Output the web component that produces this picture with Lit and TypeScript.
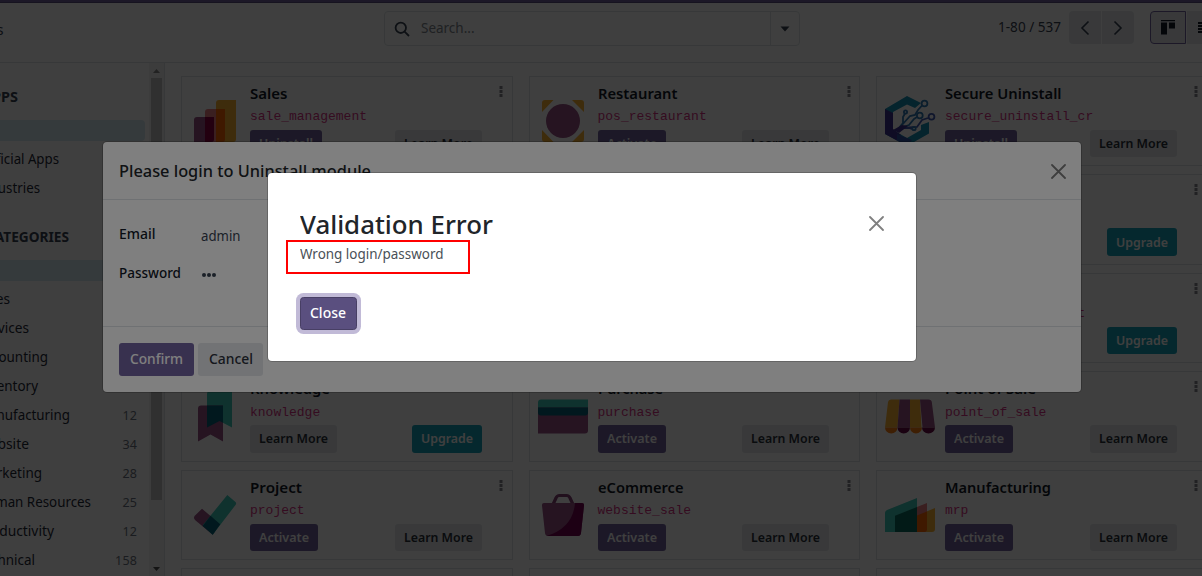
import { LitElement, html, svg, css, nothing } from "lit";
import { customElement, property } from "lit/decorators.js";

/** A single line of text set to an exact measure. */
@customElement("fit-text")
class FitText extends LitElement {
  @property({ type: Number }) w = 0;
  @property() text = "";

  static styles = css`
    :host { display: inline-block; white-space: pre; text-align: left; flex: none; }
    .t { display: inline-block; transform-origin: 0 50%; }
  `;

  render() {
    return html`<span class="t">${this.text}</span>`;
  }

  updated() {
    const span = this.renderRoot.querySelector(".t") as HTMLElement;
    const natural = span.offsetWidth ? span.getBoundingClientRect().width : 0;
    if (!natural || !this.w) return;
    this.style.width = `${this.w}px`;
    span.style.transform = `scaleX(${this.w / natural})`;
  }
}

const fit = (text: string, w: number) => html`<fit-text .text=${text} .w=${w}></fit-text>`;

const PLUM = "#985184";
const GOLD = "#fbb130";
const TEAL = "#3fc9b8";
const NAVY = "#046078";

const logos: Record<string, unknown> = {
  sales: svg`
    <path d="M29 4h17v39a3 3 0 0 1-3 3H26V7a3 3 0 0 1 3-3z" fill=${GOLD}/>
    <path d="M18 13h17v30a3 3 0 0 1-3 3H15V16a3 3 0 0 1 3-3z" fill="#e87d80"/>
    <path d="M26 13h9v30a3 3 0 0 1-3 3h-6z" fill="#fc6400"/>
    <path d="M7 21h17v22a3 3 0 0 1-3 3H4V24a3 3 0 0 1 3-3z" fill=${PLUM}/>
    <path d="M15 21h9v22a3 3 0 0 1-3 3h-6z" fill="#8c0040"/>`,
  restaurant: svg`
    <path d="M7 4h8.500L4 16V7a3 3 0 0 1 3-3zM43 4h-9L46 16V7a3 3 0 0 0-3-3zM7 46h8.500L4 34v9a3 3 0 0 0 3 3zM43 46h-9L46 34v9a3 3 0 0 1-3 3z" fill=${GOLD}/>
    <circle cx="25" cy="25" r="17" fill=${PLUM}/>`,
  secure: svg`
    <path d="M22 0L36 7 30 12 22 8.500 8 16v18l14 8 14-8v-5l8-3v11.500L22 50 0 38V13z" fill="#1690b4"/>
    <path d="M0 13l8 4v16l8 6-4 5.500L0 38z" fill="#3c3290"/>
    <path d="M12 38l10 4 5 2-5 6-10-5.500z" fill="#2f52a4"/>
    <g fill="none" stroke="#2d78b4" stroke-width="1.800">
      <path d="M13 33l5-6V21l2-3.500M17 29l8-9 5-1 3-5 4-4.500M15 32l9-3 5-6 3-2"/>
      <path d="M17 32l15-1 5-7 6-2M18 32h6l3 1" stroke="#4058b0"/>
      <circle cx="39.500" cy="7.500" r="2.900"/><circle cx="34.800" cy="19.500" r="2.900"/>
      <circle cx="46.500" cy="20.800" r="2.900" stroke="#4058b0"/><circle cx="20.500" cy="16" r="1.600"/>
      <circle cx="29" cy="32.500" r="1.700"/>
    </g>
    <path d="M8 34l9-5 6 1-9 7z" fill="#3c3290"/>`,
  knowledge: svg`
    <path d="M20 0h22v36.500L29.500 30 17 36.500V3a3 3 0 0 1 3-3z" fill=${TEAL}/>
    <path d="M11 14.500h22V50.500L20.500 43.500 8 50.500v-33a3 3 0 0 1 3-3z" fill=${PLUM}/>
    <path d="M17 14.500h16v17.300L29.500 30 17 36.500z" fill=${NAVY}/>`,
  purchase: svg`
    <path d="M3 8.500h47v13a3 3 0 0 1-3 3H0v-13a3 3 0 0 1 3-3z" fill=${TEAL}/>
    <path d="M0 16.500h50v23a3 3 0 0 1-3 3H0z" fill=${PLUM}/>
    <path d="M0 16.500h50v5a3 3 0 0 1-3 3H3a3 3 0 0 1-3-3z" fill=${NAVY}/>`,
  pos: svg`
    <path d="M6 8.500h8.500L12.500 36.500H0L3 11q.4-2.500 3-2.500zM25 8.500h10l1.500 28H25z" fill=${GOLD}/>
    <path d="M14.500 8.500H25v28H12.500zM35 8.500h8.500q3 0 3.300 2.500L50 36.500H37.500z" fill=${PLUM}/>
    <path d="M0 36.500h12.500a6.200 6 0 0 1-12.500 0zM25 36.500h12a6 6 0 0 1-12 0z" fill="#f97d10"/>
    <path d="M12.500 36.500H25a6.200 6 0 0 1-12.500 0zM37 36.500h13a6.400 6 0 0 1-13 0z" fill="#6a0a44"/>`,
  project: svg`
    <path d="M12 18.700L30 34 22.700 44.700 5 30Q3 28 4.500 26z" fill=${PLUM}/>
    <path d="M37.300 5L45.500 12q1.300 1.500 0 3L22.700 44.700 12.700 35.300z" fill=${TEAL}/>
    <path d="M20.500 25.800L30.200 34.200 22.700 44.700 12.700 36z" fill=${NAVY}/>`,
  ecommerce: svg`
    <path d="M15 14.500L18 8q1-2.500 3.500-2.500h7Q31 5.500 32 8l3 6.500" fill="none" stroke="#854076" stroke-width="3.200"/>
    <path d="M6 13h38q2.300 0 2 2.500L43 43q-.4 3-3 3H10q-2.600 0-3-3L4 15.500Q3.700 13 6 13z" fill=${PLUM}/>
    <path d="M37 13h7q2.300 0 2 2.500L43 43q-.4 3-3 3H8.500Q35 38 37 13z" fill="#740050"/>`,
  manufacturing: svg`
    <path d="M20 30.500L50 18v21q0 3-3 3H20z" fill=${GOLD}/>
    <path d="M10 25.700L42 13v26q0 3-3 3H10z" fill="#e87d80"/>
    <path d="M32 25.600L42 21.500V39q0 3-3 3h-7z" fill="#fc6400"/>
    <path d="M2 20L32 8v34H0V23q0-2.200 2-3z" fill=${TEAL}/>
    <path d="M10 25.700L32 17v25H10z" fill="#0a6a5c"/>`,
};

type Btn = [label: string, width: number, kind: string];
interface App { logo?: string; title?: string; tw?: number; code?: string; buttons?: Btn[] }

const ACTIVATE: Btn = ["Activate", 50, "primary"];
const UNINSTALL: Btn = ["Uninstall", 54, "primary"];
const LEARN: Btn = ["Learn More", 69, "secondary"];
const UPGRADE: Btn = ["Upgrade", 52, "info"];

const apps: App[] = [
  { logo: "sales", title: "Sales", tw: 37.5, code: "sale_management", buttons: [UNINSTALL, LEARN] },
  { logo: "restaurant", title: "Restaurant", tw: 79.5, code: "pos_restaurant", buttons: [ACTIVATE, LEARN] },
  { logo: "secure", title: "Secure Uninstall", tw: 116.5, code: "secure_uninstall_cr", buttons: [UNINSTALL, LEARN] },
  {}, {}, { buttons: [UPGRADE] },
  {}, {}, { code: "account_accountant", buttons: [UPGRADE] },
  { logo: "knowledge", title: "Knowledge", tw: 80, code: "knowledge", buttons: [LEARN, UPGRADE] },
  { logo: "purchase", title: "Purchase", tw: 65, code: "purchase", buttons: [ACTIVATE, LEARN] },
  { logo: "pos", title: "Point of Sale", tw: 91, code: "point_of_sale", buttons: [ACTIVATE, LEARN] },
  { logo: "project", title: "Project", tw: 52, code: "project", buttons: [ACTIVATE, LEARN] },
  { logo: "ecommerce", title: "eCommerce", tw: 85.5, code: "website_sale", buttons: [ACTIVATE, LEARN] },
  { logo: "manufacturing", title: "Manufacturing", tw: 106, code: "mrp", buttons: [ACTIVATE, LEARN] },
  {}, {}, {},
];

const buttonStyles = css`
  .btn { display: inline-flex; align-items: center; justify-content: center; border-radius: 3px;
    font-weight: 600; box-sizing: border-box; white-space: nowrap; }
  .primary { background: #71639e; color: #fff; }
  .secondary { background: #e4e7eb; color: #2b303a; }
  .info { background: #17a2b8; color: #fff; }
`;

@customElement("app-card")
class AppCard extends LitElement {
  @property({ attribute: false }) app: App = {};

  static styles = [buttonStyles, css`
    :host { position: relative; display: flex; box-sizing: border-box; border: 1px solid #dee2e6; height: 90.400px; padding: 0 8px; min-width: 0; }
    .logo { width: 50px; height: 50px; margin: 19.200px 10px 0 0; flex: none; overflow: visible; }
    .body { flex: 1; display: flex; flex-direction: column; min-width: 0; }
    .title { height: 22px; margin-top: 5px; font-size: 15px; line-height: 22px; font-weight: 600; color: #111827; }
    .code { height: 20px; margin-top: 3.400px; font: 13px/20px "Liberation Mono", monospace; color: #d63384; white-space: nowrap; }
    .row { display: flex; justify-content: space-between; margin: 2.600px 22px 0 0; }
    .row.single { justify-content: flex-end; }
    .btn { height: 27.400px; padding: 0 9px; font-size: 13px; }
    .kebab { position: absolute; right: 8.500px; top: 9px; width: 4px; height: 12px; fill: #85878c; }
  `];

  render() {
    const { logo, title, tw, code, buttons = [] } = this.app;
    return html`
      <svg class="logo" viewBox="0 0 50 50">${logo ? logos[logo] : nothing}</svg>
      <div class="body">
        <div class="title">${title ? fit(title, tw!) : nothing}</div>
        <div class="code">${code ?? nothing}</div>
        <div class="row ${buttons.length === 1 ? "single" : ""}">
          ${buttons.map(([label, w, kind]) => html`<span class="btn ${kind}">${fit(label, w)}</span>`)}
        </div>
      </div>
      <svg class="kebab" viewBox="0 0 4 12"><path d="M.5 0h3v3h-3zM.5 4h3v3h-3zM.5 8h3v3h-3z"/></svg>`;
  }
}

const categories: [string, number, string][] = [
  ["Sales", 33, ""], ["Services", 52, ""], ["Accounting", 71, ""], ["Inventory", 61, ""],
  ["Manufacturing", 93, "12"], ["Website", 52, "34"], ["Marketing", 65, "28"],
  ["Human Resources", 114, "25"], ["Productivity", 77, "12"], ["Technical", 58, "158"],
];

const cross = svg`<path d="M1 1l13 13M14 1L1 14"/>`;

@customElement("app-root")
class AppRoot extends LitElement {
  static styles = [buttonStyles, css`
    :host { display: block; position: relative; width: 1202px; height: 576px; overflow: hidden; background: #fff;
      color: #374151; font: 14px/21px "Noto Sans", "Open Sans", sans-serif; }
    .page { display: flex; flex-direction: column; height: 576px; }
    .navbar { height: 3px; background: #71639e; flex: none; box-sizing: border-box; border-bottom: 1px solid #5a4f7f; }
    .panel { display: grid; grid-template-columns: 384px 416px 1fr; height: 60px; box-sizing: border-box; border-bottom: 1px solid #dee2e6; padding-top: 8px; flex: none; }
    .crumb { margin: 8px 0 0 -31px; font-size: 15px; }
    .search { display: flex; align-items: center; height: 35px; box-sizing: border-box; border: 1px solid #dee2e6; border-radius: 4px; }
    .glass { width: 16px; height: 16px; margin: 0 11px 0 9px; fill: none; stroke: #374151; stroke-width: 1.800; }
    .hint { flex: 1; color: #80858d; padding-bottom: 2px; }
    .drop { width: 28px; height: 33px; border-left: 1px solid #dee2e6; display: grid; place-items: center; }
    .caret { width: 10px; height: 6px; fill: #374151; }
    .tools { display: flex; justify-content: flex-end; }
    .pager { margin: 5px 8px 0 0; }
    .nav { width: 32px; height: 33px; background: #e4e7eb; display: grid; place-items: center; margin-right: 1px; }
    .nav.first { border-radius: 4px 0 0 4px; }
    .nav.last { border-radius: 0 4px 4px 0; margin-right: 16px; }
    .chev { width: 10px; height: 16px; fill: none; stroke: #374151; stroke-width: 1.600; }
    .view { width: 36px; height: 33px; box-sizing: border-box; border: 1px solid #71639e; border-radius: 4px 0 0 4px; background: #e4e7eb; display: grid; place-items: center; }
    .view svg { width: 14px; height: 15px; fill: #111827; }
    .more { width: 15px; height: 33px; margin-left: 1px; background: #e4e7eb; display: flex; align-items: center; justify-content: flex-end; }
    .more svg { width: 4px; height: 14px; fill: #111827; }

    .main { display: flex; height: 513px; }
    .side { width: 149px; overflow: hidden; flex: none; color: #374151; }
    .head { height: 21px; margin: 23px 0 13px; font-weight: 700; display: flex; }
    .head.apps { margin-left: -18px; }
    .head.cats { margin-left: -14px; margin-top: 28px; }
    .sel { height: 21px; width: 145px; background: #d6e9f2; border-radius: 0 4px 4px 0; margin-bottom: 7px; }
    .item { height: 21px; margin: 0 12px 8px -23px; display: flex; justify-content: space-between; color: #1f2937; }
    .item.official { margin-left: -19px; }
    .num { font-size: 12.500px; color: #6b7280; padding-top: 1px; letter-spacing: .15px; }
    .bar { width: 15px; border-right: 1px solid #dee2e6; background: #f1f1f1; display: flex; flex-direction: column; align-items: center; flex: none; padding-top: 6px; }
    .bar svg { width: 7px; height: 4px; fill: #505050; }
    .bar svg.up { fill: #8a8a8a; }
    .thumb { width: 11px; height: 422px; background: #c1c1c1; margin: 5px 0 67px; }
    .grid { display: grid; grid-template-columns: repeat(3, 331.500px); grid-auto-rows: 90.400px; gap: 8px 16px; padding: 13px 0 0 16px; }

    .shade { position: absolute; inset: 0; background: rgba(0, 0, 0, .5); }
    .dialog { position: absolute; left: 103px; top: 142px; width: 978px; height: 250px; box-sizing: border-box; background: #fff; border-radius: 4px; box-shadow: 0 0 0 1px rgba(0, 0, 0, .2); display: flex; flex-direction: column; }
    .dhead { height: 58px; box-sizing: border-box; padding: 0 15px 0 16px; border-bottom: 1px solid #dee2e6; display: flex; align-items: center; justify-content: space-between; font-size: 17px; font-weight: 500; color: #212529; }
    .x { width: 15px; height: 15px; fill: none; stroke: #7c7c7c; stroke-width: 1.800; stroke-linecap: round; }
    .dhead .x { margin-top: 1px; }
    .form { flex: 1; display: grid; grid-template-columns: 82px 1fr; grid-auto-rows: 39px; padding: 23px 16px 0; }
    .label { font-weight: 500; color: #111827; }
    .value { padding-top: 2px; }
    .pw { display: flex; gap: 1px; padding: 11px 0 0 1px; }
    .dot { width: 4px; height: 4px; border-radius: 50%; background: #374151; }
    .dfoot { height: 66px; box-sizing: border-box; border-top: 1px solid #dee2e6; padding: 16px; display: flex; gap: 4px; }
    .dfoot .btn { height: 33px; width: 75px; padding-bottom: 2px; font-weight: 500; }
    .dfoot .btn.secondary { width: 65px; }

    .error { position: absolute; left: 268px; top: 173px; width: 648px; height: 188px; box-sizing: border-box; padding: 33px 32px 0; background: #fff; border-radius: 4px; box-shadow: 0 0 0 1px rgba(0, 0, 0, .2); }
    .ehead { display: flex; justify-content: space-between; height: 37px; }
    .etitle { font-size: 25px; line-height: 36px; font-weight: 500; color: #212529; }
    .ehead .x { margin: 10px 0 0; stroke: #808080; }
    .msg { color: #495057; height: 21px; }
    .close { width: 57px; height: 33px; margin-top: 33px; padding: 0 1px 2px 0; background: #5a4f7f; border: 1px solid #483f65; color: #fff; font-weight: 500; box-shadow: 0 0 0 4px #c1bad7; border-radius: 3.500px; }
    .mark { position: absolute; left: 286px; top: 240px; width: 184px; height: 34px; box-sizing: border-box; border: 2px solid #f00; }
  `];

  render() {
    return html`
      <div class="page">
        <div class="navbar"></div>
        <div class="panel">
          <div class="crumb">${fit("Apps", 34.5)}</div>
          <div class="search">
            <svg class="glass" viewBox="0 0 16 16"><circle cx="6.800" cy="6.800" r="5.200"/><path d="M10.600 10.600L15 15"/></svg>
            <span class="hint">${fit("Search...", 53.5)}</span>
            <span class="drop"><svg class="caret" viewBox="0 0 10 6"><path d="M.5 .5h9L5 5.500z"/></svg></span>
          </div>
          <div class="tools">
            <span class="pager">${fit("1-80 / 537", 63)}</span>
            <span class="nav first"><svg class="chev" viewBox="0 0 10 16"><path d="M8.500 1.500L2 8l6.500 6.500"/></svg></span>
            <span class="nav last"><svg class="chev" viewBox="0 0 10 16"><path d="M1.500 1.500L8 8l-6.500 6.500"/></svg></span>
            <span class="view"><svg viewBox="0 0 14 15"><path d="M0 0h14v1.200H0zM0 2.500h6v12H0zM8 2.500h6v6H8z"/></svg></span>
            <span class="more"><svg viewBox="0 0 4 14"><path d="M0 1h4v2H0zM0 4h4v2H0zM0 7h4v2H0zM0 10h4v2H0z"/></svg></span>
          </div>
        </div>
        <div class="main">
          <div class="side">
            <div class="head apps">${fit("APPS", 36)}</div>
            <div class="sel"></div>
            <div class="item official">${fit("Official Apps", 78)}</div>
            <div class="item">${fit("Industries", 63)}</div>
            <div class="head cats">${fit("CATEGORIES", 83)}</div>
            <div class="sel"></div>
            ${categories.map(([name, w, n]) => html`<div class="item">${fit(name, w)}<span class="num">${n}</span></div>`)}
          </div>
          <div class="bar">
            <svg class="up" viewBox="0 0 7 4"><path d="M3.500 0L7 4H0z"/></svg>
            <div class="thumb"></div>
            <svg viewBox="0 0 7 4"><path d="M3.500 4L7 0H0z"/></svg>
          </div>
          <div class="grid">${apps.map((a) => html`<app-card .app=${a}></app-card>`)}</div>
        </div>
      </div>

      <div class="shade"></div>
      <div class="dialog">
        <div class="dhead">${fit("Please login to Uninstall module", 252)}<svg class="x" viewBox="0 0 15 15">${cross}</svg></div>
        <div class="form">
          <span class="label">${fit("Email", 36.5)}</span><span class="value">${fit("admin", 39.5)}</span>
          <span class="label">${fit("Password", 62)}</span>
          <span class="pw"><i class="dot"></i><i class="dot"></i><i class="dot"></i></span>
        </div>
        <div class="dfoot">
          <span class="btn primary">${fit("Confirm", 53)}</span>
          <span class="btn secondary">${fit("Cancel", 44)}</span>
        </div>
      </div>

      <div class="shade"></div>
      <div class="error">
        <div class="ehead"><span class="etitle">${fit("Validation Error", 193)}</span><svg class="x" viewBox="0 0 15 15">${cross}</svg></div>
        <div class="msg">${fit("Wrong login/password", 143.5)}</div>
        <span class="btn close">${fit("Close", 36)}</span>
      </div>
      <div class="mark"></div>`;
  }
}
